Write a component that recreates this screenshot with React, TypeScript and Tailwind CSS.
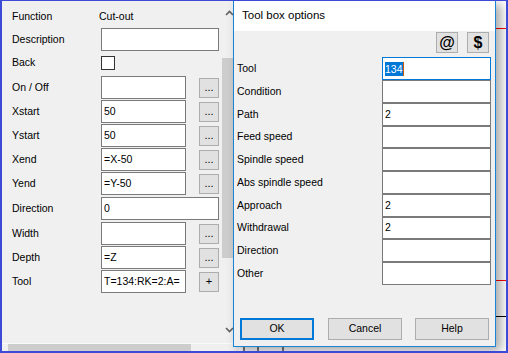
import React from "react";

type Field = {
  label: string;
  value?: string;
  wide?: boolean;
  btn?: string;
  mt: string;
};

const fields: Field[] = [
  { label: "On / Off", value: "", btn: "...", mt: "mt-[2px]" },
  { label: "Xstart", value: "50", btn: "...", mt: "mt-[1px]" },
  { label: "Ystart", value: "50", btn: "...", mt: "mt-[1px]" },
  { label: "Xend", value: "=X-50", btn: "...", mt: "mt-[1px]" },
  { label: "Yend", value: "=Y-50", btn: "...", mt: "mt-[1px]" },
  { label: "Direction", value: "0", wide: true, mt: "mt-[2px]" },
  { label: "Width", value: "", btn: "...", mt: "mt-[2px]" },
  { label: "Depth", value: "=Z", btn: "...", mt: "mt-[1px]" },
  { label: "Tool", value: "T=134:RK=2:A=", btn: "+", mt: "mt-[1px]" },
];

const options: { label: string; value: string; h: string }[] = [
  { label: "Tool", value: "134", h: "h-[23px]" },
  { label: "Condition", value: "", h: "h-[23px]" },
  { label: "Path", value: "2", h: "h-[23px]" },
  { label: "Feed speed", value: "", h: "h-[22px]" },
  { label: "Spindle speed", value: "", h: "h-[23px]" },
  { label: "Abs spindle speed", value: "", h: "h-[23px]" },
  { label: "Approach", value: "2", h: "h-[23px]" },
  { label: "Withdrawal", value: "2", h: "h-[22px]" },
  { label: "Direction", value: "", h: "h-[23px]" },
  { label: "Other", value: "", h: "h-[23px]" },
];

function SmallButton({ children }: { children: React.ReactNode }) {
  return (
    <div className="ml-[13px] flex h-[20px] w-[20px] items-center justify-center border border-[#adadad] bg-[#e1e1e1] text-[11px] leading-none text-black">
      {children}
    </div>
  );
}

function LeftPanel() {
  return (
    <div className="flex w-[237px] flex-col bg-[#f0f0f0]">
      <div className="flex flex-1">
        <div className="flex-1 pl-[10px] pt-[5px]">
          <div className="flex h-[22px] items-center">
            <span className="w-[87px]">Function</span>
            <span>Cut-out</span>
          </div>
          <div className="flex h-[23px] items-center">
            <span className="w-[89px]">Description</span>
            <div className="h-[23px] w-[118px] border border-[#7a7a7a] bg-white" />
          </div>
          <div className="flex h-[23px] items-center">
            <span className="w-[89px]">Back</span>
            <div className="h-[14px] w-[14px] border border-[#333] bg-white" />
          </div>
          {fields.map((f) => (
            <div key={f.label} className={`flex h-[23px] items-center ${f.mt}`}>
              <span className="w-[89px]">{f.label}</span>
              <div
                className={`flex h-[23px] items-center overflow-hidden whitespace-nowrap border border-[#7a7a7a] bg-white pl-[2px] ${
                  f.wide ? "w-[118px]" : "w-[85px]"
                }`}
              >
                {f.value}
              </div>
              {f.btn ? <SmallButton>{f.btn}</SmallButton> : null}
            </div>
          ))}
        </div>
        <div className="relative w-[17px] bg-[#f0f0f0]">
          <svg className="absolute left-[3px] top-[9px]" width="9" height="6" viewBox="0 0 9 6">
            <path d="M1 5 L4.5 1.5 L8 5" fill="none" stroke="#606060" strokeWidth="1.6" />
          </svg>
          <div className="absolute left-0 top-[57px] h-[200px] w-[14px] bg-[#cdcdcd]" />
          <svg className="absolute bottom-[10px] left-[3px]" width="9" height="6" viewBox="0 0 9 6">
            <path d="M1 1 L4.5 4.5 L8 1" fill="none" stroke="#606060" strokeWidth="1.6" />
          </svg>
        </div>
      </div>
      <div className="flex h-[8px] items-stretch border-t border-[#fafafa] bg-[#f0f0f0]">
        <div className="w-[6px]" />
        <div className="w-[183px] bg-[#cdcdcd]" />
      </div>
    </div>
  );
}

function Canvas() {
  return (
    <div className="flex-1 bg-white">
      <svg width="267" height="350" viewBox="0 0 267 350">
        <line x1="0" y1="27.5" x2="267" y2="27.5" stroke="#ff0000" strokeWidth="1" />
        <line x1="0" y1="279.5" x2="267" y2="279.5" stroke="#ff0000" strokeWidth="1" />
        <line x1="0" y1="315.5" x2="267" y2="315.5" stroke="#000" strokeWidth="1" />
        <rect x="4" y="330" width="2" height="20" fill="#7a7a7a" />
        <rect x="18" y="330" width="2" height="20" fill="#7a7a7a" />
        <rect x="43" y="330" width="2" height="20" fill="#7a7a7a" />
      </svg>
    </div>
  );
}

function Dialog() {
  return (
    <div className="absolute left-[231px] top-[-1px] flex h-[347px] w-[263px] flex-col border-x border-b border-[#1883d7] bg-[#f0f0f0] shadow-[5px_4px_10px_rgba(0,0,0,0.35)]">
      <div className="flex h-[31px] items-center bg-white pl-[8px] text-[11.5px]">Tool box options</div>
      <div className="mt-[1px] flex justify-end gap-[9px] pr-[6px]">
        <div className="flex h-[21px] w-[22px] items-center justify-center border border-[#adadad] bg-[#e1e1e1] text-[16px] font-bold leading-none">
          @
        </div>
        <div className="flex h-[21px] w-[22px] items-center justify-center border border-[#adadad] bg-[#e1e1e1] text-[16px] font-bold leading-none">
          $
        </div>
      </div>
      <div className="mt-[4px] flex flex-col pl-[3px] pr-[4px]">
        {options.map((o, i) => (
          <div key={o.label} className={`flex items-center ${o.h}`}>
            <span className="flex-1">{o.label}</span>
            <div
              className={`flex h-full w-[109px] items-center border bg-white pl-[2px] ${
                i === 0 ? "border-[#0078d7]" : "border-[#7a7a7a]"
              }`}
            >
              {i === 0 ? (
                <span className="border-r border-[#c65b00] bg-[#0078d7] leading-[14px] text-white">{o.value}</span>
              ) : (
                o.value
              )}
            </div>
          </div>
        ))}
      </div>
      <div className="mt-[33px] flex pl-[6px]">
        <div className="flex h-[22px] w-[74px] items-center justify-center border-2 border-[#0078d7] bg-[#e1e1e1]">OK</div>
        <div className="ml-[14px] flex h-[22px] w-[74px] items-center justify-center border border-[#adadad] bg-[#e1e1e1]">
          Cancel
        </div>
        <div className="ml-[13px] flex h-[22px] w-[74px] items-center justify-center border border-[#adadad] bg-[#e1e1e1]">
          Help
        </div>
      </div>
    </div>
  );
}

export default function App() {
  return (
    <div className="relative flex h-[353px] w-[508px] overflow-hidden border-x-2 border-b-2 border-t border-[#3c4bd6] font-['Liberation_Sans',Arial,sans-serif] text-[10.5px] text-black">
      <LeftPanel />
      <Canvas />
      <Dialog />
    </div>
  );
}
